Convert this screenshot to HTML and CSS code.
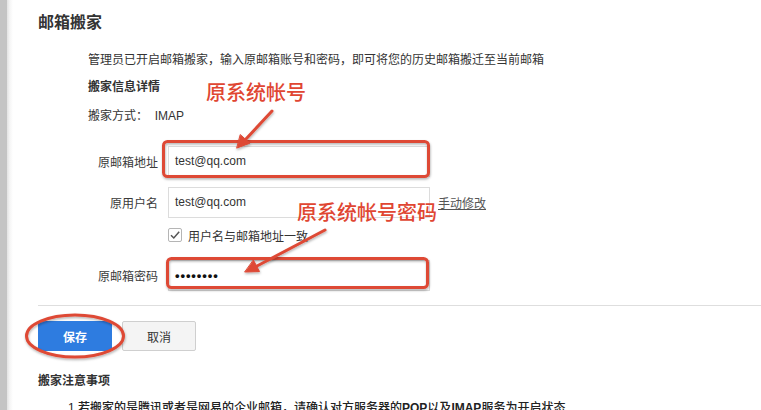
FILE: index.html
```html
<!DOCTYPE html>
<html lang="zh-CN">
<head>
<meta charset="utf-8">
<title>邮箱搬家</title>
<link rel="stylesheet" href="styles.css">
</head>
<body>
<div class="page">
  <div class="content">
    <h1 class="title">邮箱搬家</h1>
    <div class="section">
      <p class="intro">管理员已开启邮箱搬家，输入原邮箱账号和密码，即可将您的历史邮箱搬迁至当前邮箱</p>
      <p class="subhead">搬家信息详情</p>
      <p class="method">搬家方式：&nbsp; IMAP</p>
      <div class="form">
        <div class="row row-first">
          <label class="label">原邮箱地址</label>
          <div class="input">test@qq.com</div>
        </div>
        <div class="row row-second">
          <label class="label">原用户名</label>
          <div class="input">test@qq.com</div>
          <a class="link" href="#">手动修改</a>
        </div>
        <div class="check-row">
          <span class="checkbox">
            <svg width="12" height="12" viewBox="0 0 12 12"><path d="M2 6.2 L4.8 9 L10.2 2.8" fill="none" stroke="#555" stroke-width="1.5"/></svg>
          </span>
          <span class="check-label">用户名与邮箱地址一致</span>
        </div>
        <div class="row row-third">
          <label class="label">原邮箱密码</label>
          <div class="input input-pass">••••••••</div>
        </div>
      </div>
    </div>
    <div class="divider"></div>
    <div class="actions">
      <button class="btn btn-primary">保存</button>
      <button class="btn btn-default">取消</button>
    </div>
    <p class="notes-title">搬家注意事项</p>
    <ol class="notes">
      <li>1.若搬家的是腾讯或者是网易的企业邮箱，请确认对方服务器的<b>POP</b>以及<b>IMAP</b>服务为开启状态</li>
    </ol>
  </div>

  <svg class="marks" width="761" height="410" viewBox="0 0 761 410">
    <defs>
      <filter id="sh" x="-10%" y="-10%" width="130%" height="140%">
        <feDropShadow dx="0.5" dy="1.5" stdDeviation="1" flood-color="#000" flood-opacity="0.3"/>
      </filter>
    </defs>
    <g filter="url(#sh)" fill="none" stroke="#de4a36" stroke-width="3">
      <rect x="163.5" y="141.5" width="265" height="35" rx="4"/>
      <rect x="167.5" y="258.5" width="260" height="29" rx="4"/>
      <ellipse cx="75" cy="336" rx="48.5" ry="21"/>
    </g>
    <g filter="url(#sh)" fill="#de4a36" stroke="#de4a36" stroke-linecap="round">
      <line x1="272" y1="111" x2="246" y2="139" stroke-width="3"/>
      <polygon points="237,148 249.8,143.2 240.5,134.8" stroke-width="1" stroke-linejoin="round"/>
      <line x1="325" y1="230" x2="257" y2="266" stroke-width="3"/>
      <polygon points="245,272 259.5,271.5 253.5,260.3" stroke-width="1" stroke-linejoin="round"/>
    </g>
  </svg>
  <span class="note note-1">原系统帐号</span>
  <span class="note note-2">原系统帐号密码</span>
</div>
</body>
</html>
```
FILE: styles.css
```css
* { box-sizing: border-box; }
html, body { margin: 0; padding: 0; }
body {
  background: #fff;
  font-family: "Liberation Sans", "Noto Sans CJK SC", sans-serif;
  color: #333;
  font-size: 12px;
}
.page {
  position: relative;
  width: 761px;
  height: 410px;
  overflow: hidden;
  background: linear-gradient(to right, #c4c4c4 0, #c4c4c4 7px, #e2e2e2 7px, #f6f6f6 10px, #fff 13px);
}
.content {
  padding: 12px 0 0 38px;
}
.title {
  margin: 0;
  font-size: 16px;
  line-height: 22px;
  font-weight: bold;
  color: #333;
}
.section {
  margin-left: 50px;
}
.intro {
  margin: 16px 0 0;
  line-height: 20px;
  color: #333;
}
.subhead {
  margin: 7px 0 0;
  line-height: 20px;
  font-weight: bold;
}
.method {
  margin: 9px 0 0;
  line-height: 20px;
}
.form {
  margin-top: 20px;
}
.row {
  display: flex;
  align-items: center;
  height: 31px;
}
.row-second { margin-top: 10px; }
.row-third { margin-top: 17px; }
.label {
  width: 70px;
  text-align: right;
  color: #3a3a3a;
  margin-right: 10px;
}
.input {
  width: 262px;
  height: 31px;
  border: 1px solid #dcdcdc;
  background: #fff;
  padding-left: 6px;
  line-height: 29px;
  font-size: 12px;
  color: #333;
}
.input-pass {
  font-size: 13px;
  letter-spacing: 0.9px;
  color: #111;
  font-weight: bold;
}
.link {
  margin-left: 8px;
  color: #555;
  text-decoration: underline;
}
.check-row {
  display: flex;
  align-items: center;
  margin: 9px 0 0 80px;
  height: 16px;
}
.checkbox {
  width: 14px;
  height: 14px;
  border: 1px solid #b5b5b5;
  border-radius: 2px;
  display: flex;
  align-items: center;
  justify-content: center;
  background: #fff;
}
.check-label {
  margin-left: 6px;
  color: #333;
}
.divider {
  margin-top: 14px;
  height: 1px;
  background: #dedede;
}
.actions {
  display: flex;
  gap: 10px;
  margin-top: 15px;
}
.btn {
  width: 74px;
  height: 30px;
  font-family: "Liberation Sans", "Noto Sans CJK SC", sans-serif;
  font-size: 12px;
  border-radius: 2px;
  padding: 0;
}
.btn-primary {
  background: #2e7ce0;
  border: 1px solid #2e7ce0;
  color: #fff;
  font-weight: bold;
}
.btn-default {
  background: #f4f4f4;
  border: 1px solid #cfcfcf;
  color: #333;
}
.notes-title {
  margin: 20px 0 0;
  line-height: 20px;
  font-weight: bold;
  color: #333;
}
.notes {
  list-style: none;
  margin: 7px 0 0;
  padding-left: 30px;
  line-height: 20px;
  font-size: 12px;
  font-weight: 500;
  color: #222;
}
.marks {
  position: absolute;
  left: 0;
  top: 0;
  pointer-events: none;
}
.note {
  position: absolute;
  font-family: "Noto Sans CJK SC", sans-serif;
  font-size: 20px;
  line-height: 24px;
  font-weight: 500;
  color: #e04632;
  white-space: nowrap;
}
.note-1 { left: 206px; top: 80px; }
.note-2 { left: 297px; top: 200px; }
```
